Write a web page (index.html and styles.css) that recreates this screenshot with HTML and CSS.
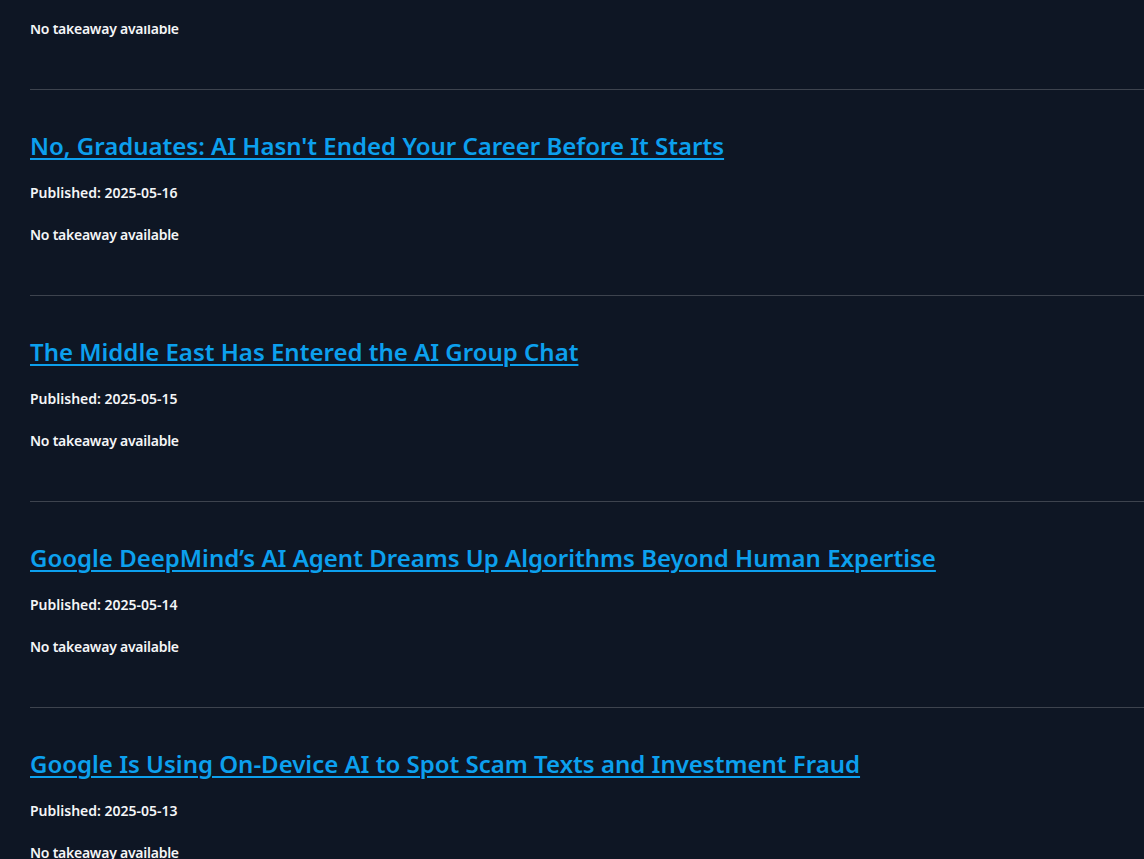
FILE: index.html
```html
<!DOCTYPE html>
<html lang="en">
<head>
<meta charset="utf-8">
<title>AI News</title>
<link rel="stylesheet" href="styles.css">
</head>
<body>
<header class="topbar"></header>
<main class="feed">
  <article class="item item-partial">
    <p class="takeaway">No takeaway available</p>
  </article>
  <article class="item">
    <h3 class="title"><a href="#">No, Graduates: AI Hasn't Ended Your Career Before It Starts</a></h3>
    <p class="meta">Published: 2025-05-16</p>
    <p class="takeaway">No takeaway available</p>
  </article>
  <article class="item">
    <h3 class="title"><a href="#">The Middle East Has Entered the AI Group Chat</a></h3>
    <p class="meta">Published: 2025-05-15</p>
    <p class="takeaway">No takeaway available</p>
  </article>
  <article class="item">
    <h3 class="title"><a href="#">Google DeepMind’s AI Agent Dreams Up Algorithms Beyond Human Expertise</a></h3>
    <p class="meta">Published: 2025-05-14</p>
    <p class="takeaway">No takeaway available</p>
  </article>
  <article class="item">
    <h3 class="title"><a href="#">Google Is Using On-Device AI to Spot Scam Texts and Investment Fraud</a></h3>
    <p class="meta">Published: 2025-05-13</p>
    <p class="takeaway">No takeaway available</p>
  </article>
</main>
</body>
</html>
```
FILE: styles.css
```css
html, body {
  margin: 0;
  padding: 0;
  background: #0e1624;
  overflow: hidden;
}
body {
  font-family: "Noto Sans", "Open Sans", sans-serif;
  color: #f4f5f7;
}
.topbar {
  position: fixed;
  top: 0;
  left: 0;
  right: 0;
  height: 25px;
  background: #0e1624;
  z-index: 2;
}
.feed {
  display: flex;
  flex-direction: column;
  padding-left: 30px;
}
.item {
  display: flex;
  flex-direction: column;
  padding: 38px 0 50px;
  border-bottom: 1px solid rgba(250, 250, 250, 0.2);
}
.item-partial {
  padding-top: 19px;
}
.title {
  margin: 0;
  font-size: 24px;
  line-height: 36px;
  font-weight: 600;
}
.title a {
  color: #0ca0ee;
  text-decoration: underline;
  text-decoration-thickness: 2px;
  text-underline-offset: 3px;
}
.meta {
  margin: 19px 0 0;
  font-size: 14px;
  line-height: 20px;
  font-weight: 600;
}
.takeaway {
  margin: 22px 0 0;
  font-size: 14px;
  line-height: 20px;
  font-weight: 600;
  letter-spacing: -0.25px;
}
.item-partial .takeaway {
  margin-top: 0;
}
```
